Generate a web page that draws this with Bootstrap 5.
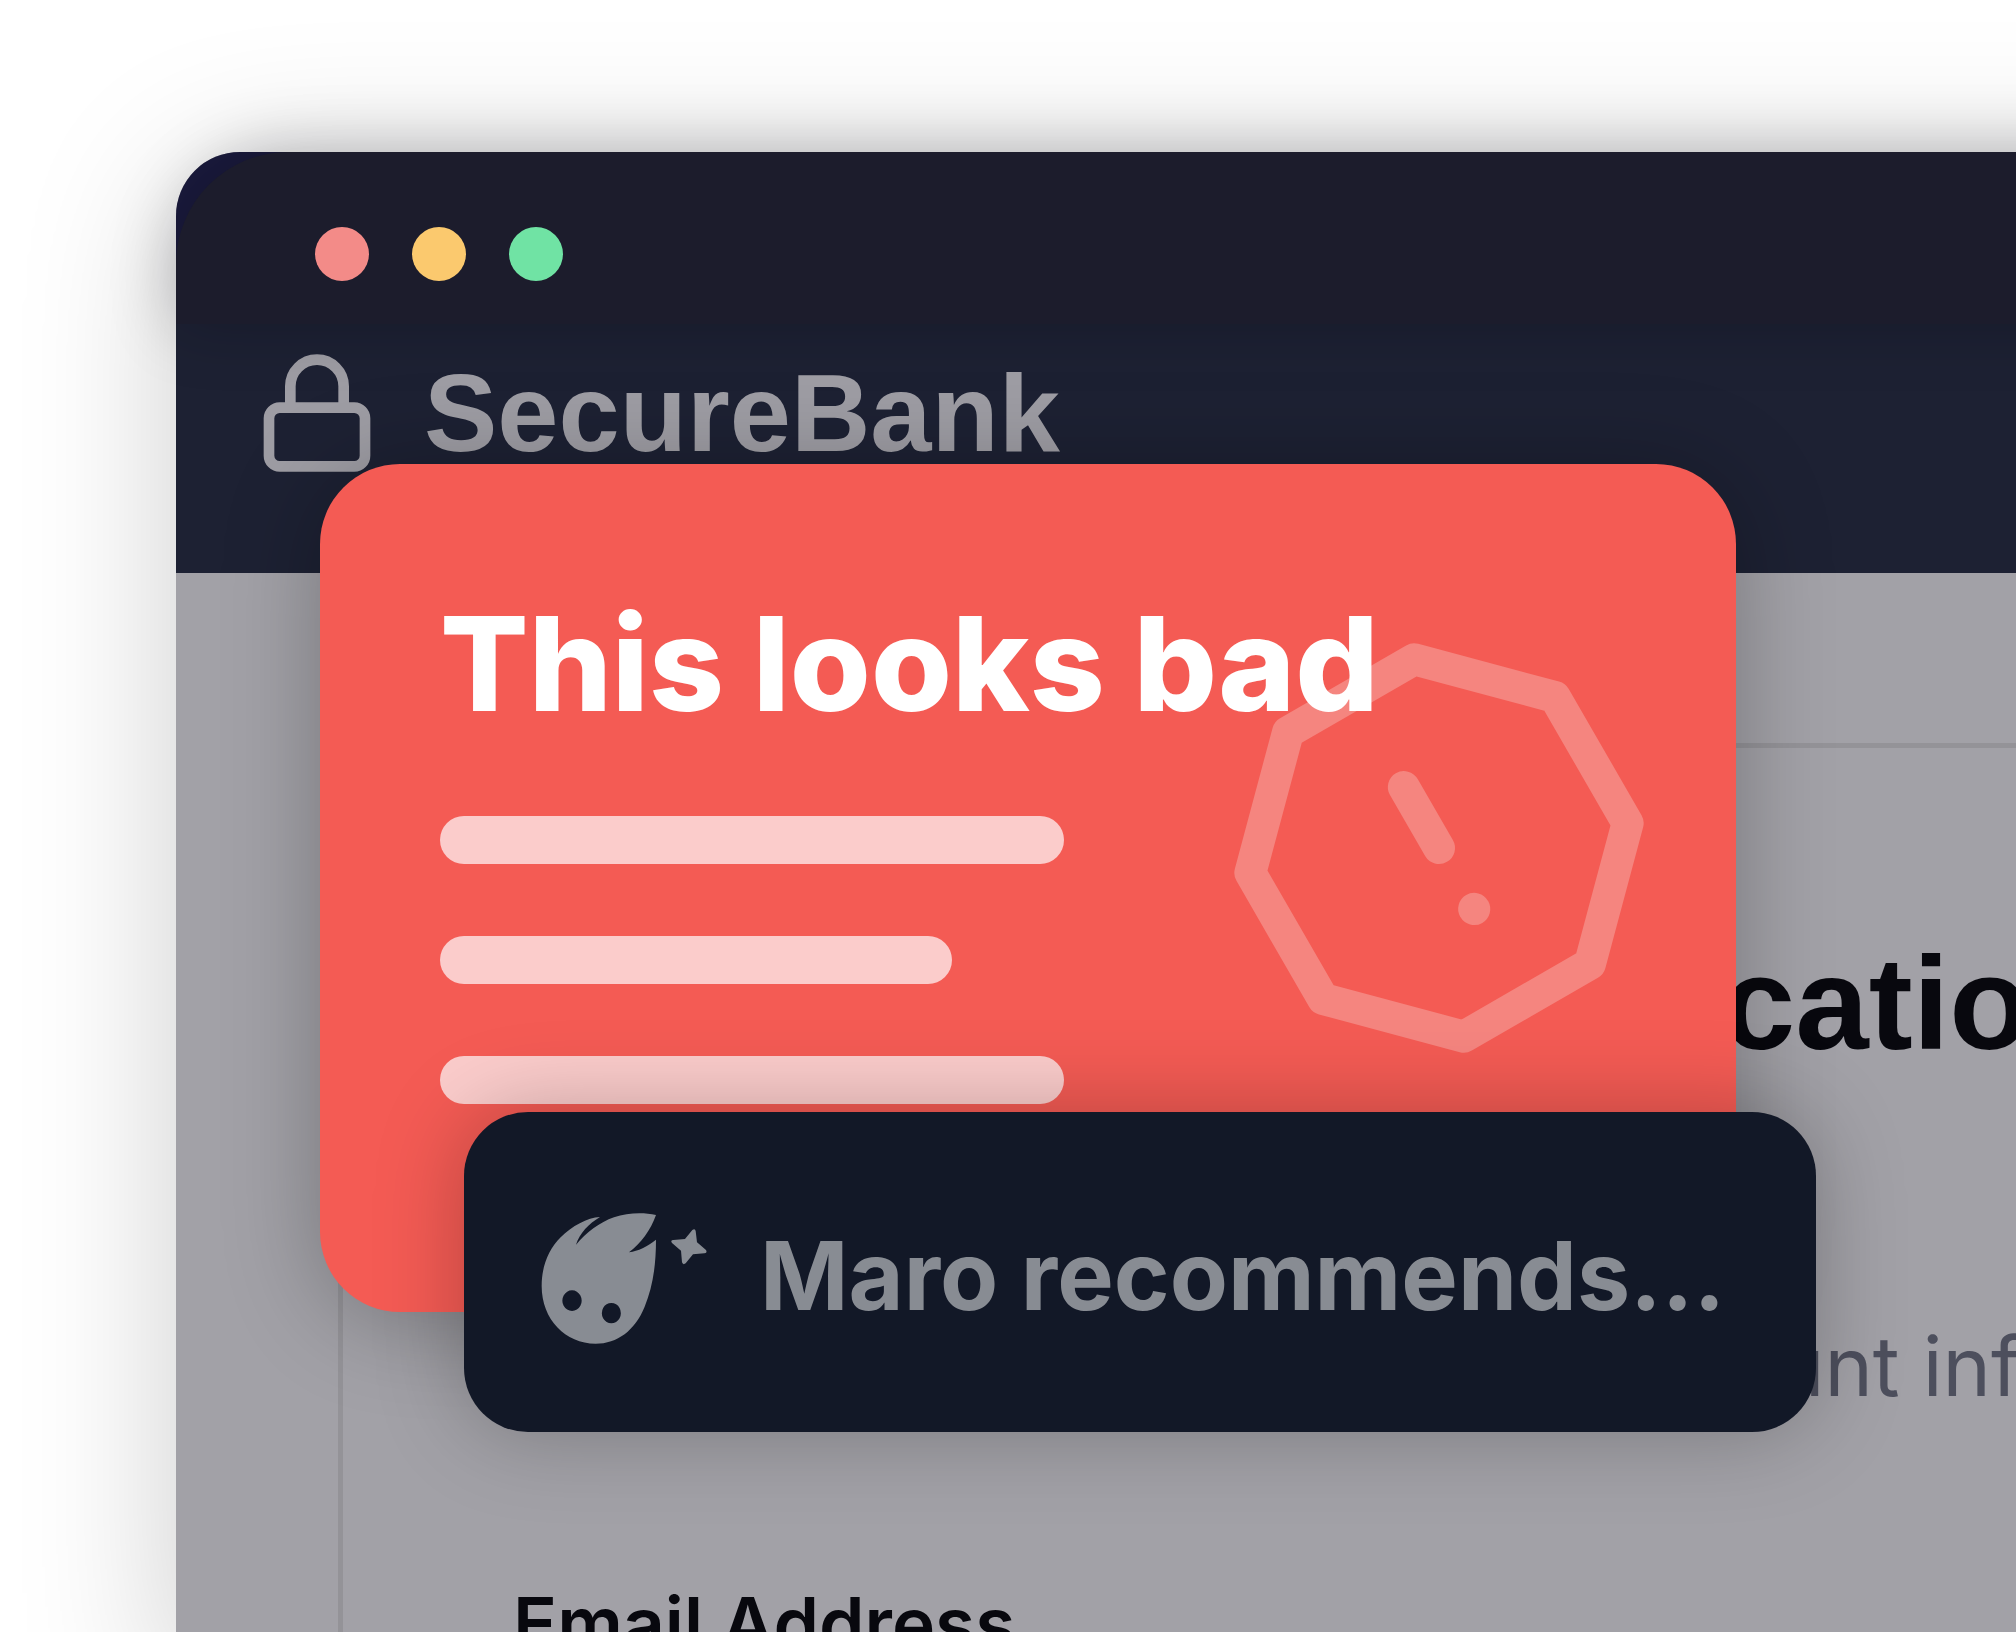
<!DOCTYPE html>
<html lang="en">
<head>
<meta charset="utf-8">
<meta name="viewport" content="width=device-width, initial-scale=1">
<title>SecureBank</title>
<link href="https://cdn.jsdelivr.net/npm/bootstrap@5.3.0/dist/css/bootstrap.min.css" rel="stylesheet">
<style>
  body { background: #fff; min-height: 100vh; overflow: hidden; font-family: Inter, "Liberation Sans", sans-serif; }
  .stage { height: 100vh; padding: 152px 0 0 176px; overflow: hidden; }
  .browser { min-height: 100%; margin: 0 -200px -80px 0; background: #a2a1a7; border-top-left-radius: 64px; box-shadow: 0 24px 160px rgba(0,0,0,.2); }
  .corner { background: #1a1a3c; border-top-left-radius: 64px; }
  .titlebar { height: 172px; padding: 32px 139px 0; gap: 43px; background: #1c1c2c; border-top-left-radius: 112px; box-shadow: 0 0 64px rgba(0,0,16,.25); z-index: 1; }
  .light { width: 54px; height: 54px; }
  .light-red { background: #f38b88; }
  .light-amber { background: #fbc96e; }
  .light-green { background: #70e3a4; }
  .site-head { height: 249px; padding: 25px 77px; gap: 43px; background: #1d2133; }
  .lock { width: 128px; height: 128px; }
  .brand { font: 700 110px/128px "Liberation Sans", sans-serif; color: #9e9da4; z-index: 1; }
  .site-body { padding: 170px 0 0 162px; }
  .panel { border: solid #949398; border-width: 5px 0 0 5px; border-top-left-radius: 32px; padding-top: 176px; white-space: nowrap; }
  .panel-title { font: 700 132px/160px "Liberation Sans", sans-serif; color: #08080e; padding-left: 1056px; margin: 0; }
  .panel-text { font: 400 82px/96px Inter, sans-serif; color: #4d4f5d; padding-left: 1244px; margin: 235px 0 0; }
  .panel-label { font: 600 73px/88px Inter, sans-serif; color: #08080e; margin: 165px 0 0 170px; }
  .alert-box { left: 144px; top: 312px; width: 1416px; height: 848px; padding: 120px; border-radius: 80px; background: #f45b54; box-shadow: 0 8px 96px rgba(0,0,0,.27); z-index: 2; }
  .alert-title { font: 800 131px/160px Inter, sans-serif; color: #fff; margin: 0 0 72px; z-index: 1; }
  .bar-list { gap: 72px; }
  .bar { height: 48px; background: #fbcccb; }
  .bar-long { width: 624px; }
  .bar-short { width: 512px; }
  .octagon { right: 86px; top: 173px; width: 422px; height: 422px; }
  .tip-box { left: 288px; top: 960px; width: 1352px; height: 320px; padding: 0 76px; gap: 52px; border-radius: 64px; background: #121827; color: #888c93; box-shadow: 0 0 88px rgba(0,0,0,.25); z-index: 3; border: 0; font: 700 95px/120px Inter, sans-serif; white-space: nowrap; }
  .mascot { width: 168px; height: 144px; }
</style>
</head>
<body>
<div class="stage">
  <div class="browser position-relative">
    <div class="corner">
      <div class="titlebar d-flex align-items-center position-relative">
        <span class="light light-red rounded-circle"></span>
        <span class="light light-amber rounded-circle"></span>
        <span class="light light-green rounded-circle"></span>
      </div>
    </div>
    <header class="site-head d-flex align-items-start">
      <svg class="lock flex-shrink-0" viewBox="0 0 24 24" fill="none" stroke="#9e9da4" stroke-width="2" aria-hidden="true"><rect x="3" y="11" width="18" height="11" rx="2"/><path d="M7 11V7a5 5 0 0 1 10 0v4"/></svg>
      <span class="brand">SecureBank</span>
    </header>
    <main class="site-body">
      <section class="panel">
        <h1 class="panel-title">Verification</h1>
        <p class="panel-text">account information</p>
        <p class="panel-label">Email Address</p>
      </section>
    </main>
    <section class="alert-box position-absolute">
      <svg class="octagon position-absolute" viewBox="0 0 24 24" fill="none" stroke="#f5857f" stroke-width="1.82" stroke-linecap="round" stroke-linejoin="round" overflow="visible" aria-hidden="true"><g transform="rotate(-30 12 12)"><path d="M7.86 2h8.28L22 7.86v8.28L16.14 22H7.86L2 16.14V7.86z"/><path d="M12 8v4M12 16v.01"/></g></svg>
      <h2 class="alert-title position-relative">This looks bad</h2>
      <div class="bar-list d-flex flex-column">
        <span class="bar bar-long rounded-pill"></span>
        <span class="bar bar-short rounded-pill"></span>
        <span class="bar bar-long rounded-pill"></span>
      </div>
    </section>
    <button type="button" class="tip-box position-absolute d-flex align-items-center">
      <svg class="mascot flex-shrink-0" viewBox="120 60 504 432" fill="#888c93" aria-hidden="true">
        <path fill-rule="evenodd" d="M300 111C262 113 216 138 182 172C146 208 125 258 125 318C125 418 196 491 287 491C352 491 405 451 434 380C457 323 468 262 468 179C441 200 415 213 387 217C423 189 452 151 468 105C430 97 383 98 342 112C299 127 258 158 228 194C239 160 266 131 300 111ZM216 331a29 31 0 1 0 .1 0ZM334 369a28.500 30.500 0 1 0 .1 0Z"/>
        <path d="M577 150Q585 144 587 153L591 187L618 210Q623 219 613 220L579 223L557 250Q549 256 546 247L543 212L516 189Q510 181 520 180L555 177Z"/>
      </svg>
      <span class="pt-2">Maro recommends...</span>
    </button>
  </div>
</div>
<script src="https://cdn.jsdelivr.net/npm/bootstrap@5.3.0/dist/js/bootstrap.bundle.min.js"></script>
</body>
</html>
